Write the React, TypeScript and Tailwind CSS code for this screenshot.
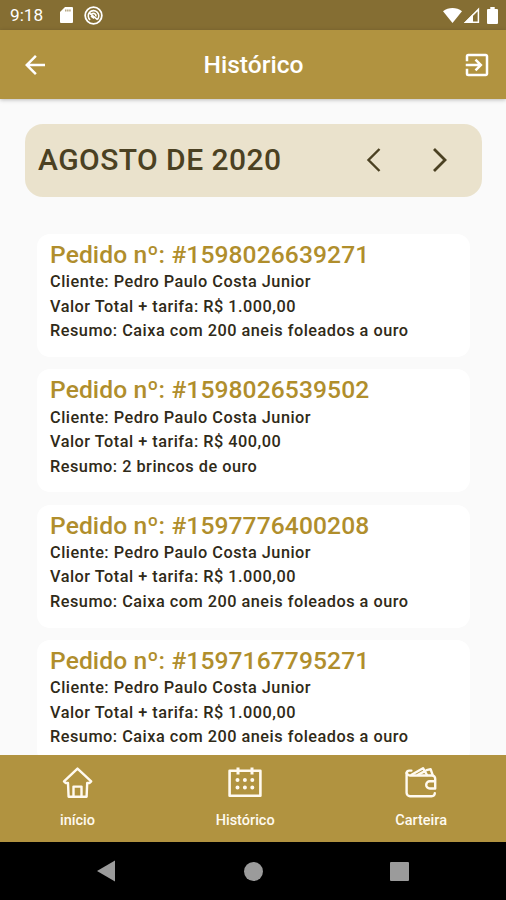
import { MdArrowBack, MdExitToApp } from "react-icons/md";

interface Order {
  id: string;
  client: string;
  total: string;
  summary: string;
}

const orders: Order[] = [
  { id: "1598026639271", client: "Pedro Paulo Costa Junior", total: "1.000,00", summary: "Caixa com 200 aneis foleados a ouro" },
  { id: "1598026539502", client: "Pedro Paulo Costa Junior", total: "400,00", summary: "2 brincos de ouro" },
  { id: "1597776400208", client: "Pedro Paulo Costa Junior", total: "1.000,00", summary: "Caixa com 200 aneis foleados a ouro" },
  { id: "1597167795271", client: "Pedro Paulo Costa Junior", total: "1.000,00", summary: "Caixa com 200 aneis foleados a ouro" },
];

function StatusBar() {
  return (
    <div className="flex h-[30px] shrink-0 items-center bg-[#856e33] pl-[10px] pr-[8px] text-white">
      <span className="w-[50px] pt-px text-[17.2px] leading-none">9:18</span>
      <svg className="mr-[11px] h-[16px] w-[13px]" viewBox="0 0 13 16">
        <path d="M5 0h7a1 1 0 0 1 1 1v14a1 1 0 0 1-1 1H1a1 1 0 0 1-1-1V5z" fill="currentColor" />
        <path d="M5 3.4h6" stroke="#856e33" strokeOpacity=".6" strokeWidth="2" strokeDasharray="1.5 .6" />
      </svg>
      <svg className="size-[19px]" viewBox="0 0 18 18" fill="none" stroke="currentColor">
        <circle cx="9" cy="9" r="7.9" strokeWidth="1.7" />
        <path d="M5.8 13.2a5 5 0 1 1 6.8-.3" strokeWidth="1.5" />
        <path d="M6.8 8.2a2.4 2.4 0 0 1 4.4 1.8" strokeWidth="1.5" />
        <path d="M4.6 6.2l8.2 6.6M6.6 9.5l3 2.3" strokeWidth="1.5" />
      </svg>
      <div className="ml-auto flex items-center">
        <svg className="h-[17px] w-[19px]" viewBox="0 0 19 17" fill="currentColor">
          <path d="M0 4.2C5.5 0 13.5 0 19 4.2L9.5 16z" />
        </svg>
        <svg className="ml-[1px] h-[17px] w-[17px]" viewBox="0 0 17 17">
          <path d="M2.6 15.2L15.4 2.4v12.8z" fill="none" stroke="currentColor" strokeWidth="1.5" />
          <path d="M1 15.9L10 6.9v9z" fill="currentColor" />
        </svg>
        <svg className="ml-[7px] h-[17px] w-[11px]" viewBox="0 0 11 17" fill="currentColor">
          <path d="M3.3 0h4.4v2H10a1 1 0 0 1 1 1v13a1 1 0 0 1-1 1H1a1 1 0 0 1-1-1V3a1 1 0 0 1 1-1h2.3z" />
        </svg>
      </div>
    </div>
  );
}

function AppBar() {
  return (
    <header className="z-10 flex h-[69px] shrink-0 items-center justify-between bg-[#b19340] pl-[20px] pr-[14px] text-white shadow-[0_1px_4px_rgba(0,0,0,0.25)]">
      <MdArrowBack className="size-[30px]" />
      <h1 className="pr-[5px] pt-px text-[24.6px] font-medium leading-none">Histórico</h1>
      <MdExitToApp className="size-[30px]" />
    </header>
  );
}

function OrderCard({ order }: { order: Order }) {
  return (
    <li className="h-[123px] shrink-0 rounded-[13px] bg-white pl-[13px] pt-[8px] text-[16.3px] font-medium leading-[24.6px] tracking-[0.5px] text-[#302a18]">
      <h3 className="pb-[1.7px] text-[24.6px] leading-[26.6px] tracking-[0.1px] text-[#b08e2c]">Pedido nº: #{order.id}</h3>
      <p>Cliente: {order.client}</p>
      <p>Valor Total + tarifa: R$ {order.total}</p>
      <p>Resumo: {order.summary}</p>
    </li>
  );
}

function TabBar() {
  return (
    <nav className="flex h-[87px] shrink-0 items-start justify-between bg-[#b19340] pl-[60px] pr-[59px] pt-[11px] text-[14.5px] font-medium leading-[18px] text-[#fffaf0]">
      <a className="flex flex-col items-center gap-[14px]">
        <svg className="h-[32px] w-[32px]" viewBox="0 0 32 32" fill="none" stroke="currentColor" strokeWidth="2.4" strokeLinejoin="round">
          <path d="M15.5 2.6L2 15.4l1.6 1.6h2.4l.6 13.7h18l.6-13.7h2.4l1.6-1.6z" />
          <path d="M11.5 30V20.6h8V30" />
        </svg>
        <span>início</span>
      </a>
      <a className="flex flex-col items-center gap-[14px]">
        <svg className="h-[32px] w-[34px]" viewBox="0 0 34 32" fill="none" stroke="currentColor" strokeWidth="2.6">
          <path d="M1.6 4.8h30.8v25H1.6z" strokeLinejoin="round" />
          <path d="M10 1.5v7M24 1.500v7" strokeWidth="3" />
          <path d="M9.500 14h15M9.500 21.500h15" strokeWidth="4" strokeLinecap="round" strokeDasharray="0 7.400" />
        </svg>
        <span>Histórico</span>
      </a>
      <a className="flex flex-col items-center gap-[14px]">
        <svg className="h-[32px] w-[32px]" viewBox="0 0 32 32" fill="none" stroke="currentColor" strokeWidth="2.4" strokeLinecap="round" strokeLinejoin="round">
          <path d="M6.400 4.600H4.400a2.600 2.600 0 0 0-2.800 2.500M2 7.500c.6 1.400 1.400 2 2.800 2H27a3.200 3.200 0 0 1 3.200 3.200v9.800h-5.400a3.600 3.600 0 0 1 0-7.200H30" />
          <path d="M1.600 7V26.800a3.400 3.400 0 0 0 3.400 3.400H26.600a3.200 3.200 0 0 0 3.200-3" />
          <path d="M6.600 8.800L18 2.200l4 6.800M13 8.800l6-3.200M21.600 4.200l4-1 2 5.600" />
        </svg>
        <span>Carteira</span>
      </a>
    </nav>
  );
}

function SystemNav() {
  return (
    <div className="flex h-[58px] shrink-0 items-center justify-between bg-black pl-[97px] pr-[97px] text-[#9b9b9b]">
      <svg className="h-[22px] w-[18px]" viewBox="0 0 18 22" fill="currentColor">
        <path d="M18 0.5v21L0 11z" />
      </svg>
      <div className="ml-[2px] size-[19px] rounded-full bg-[#9b9b9b]" />
      <div className="size-[19px] rounded-[1px] bg-[#9b9b9b]" />
    </div>
  );
}

export default function App() {
  return (
    <div className="flex h-[900px] w-[506px] flex-col overflow-hidden bg-[#fafafa] font-['Roboto',sans-serif]">
      <StatusBar />
      <AppBar />
      <main className="flex min-h-0 flex-1 flex-col overflow-hidden pl-[25px] pr-[24px] pt-[25px]">
        <section className="flex h-[73px] shrink-0 items-center rounded-[18px] bg-[#eae2cc] pl-[13px] text-[#4b4122]">
          <h2 className="w-[327px] pb-[2px] text-[30px] font-medium leading-none tracking-[0.45px]">AGOSTO DE 2020</h2>
          <div className="flex gap-[51px] pb-[2px]">
            <svg className="h-[24px] w-[16px]" viewBox="0 0 16 24" fill="none" stroke="currentColor" strokeWidth="2.4">
              <path d="M14.5 1L3.5 12l11 11" />
            </svg>
            <svg className="h-[24px] w-[16px]" viewBox="0 0 16 24" fill="none" stroke="currentColor" strokeWidth="2.8">
              <path d="M2 1l11 11L2 23" />
            </svg>
          </div>
        </section>
        <ul className="mx-[12px] mt-[37px] flex flex-col gap-[12.3px]">
          {orders.map((order) => (
            <OrderCard key={order.id} order={order} />
          ))}
        </ul>
      </main>
      <TabBar />
      <SystemNav />
    </div>
  );
}
